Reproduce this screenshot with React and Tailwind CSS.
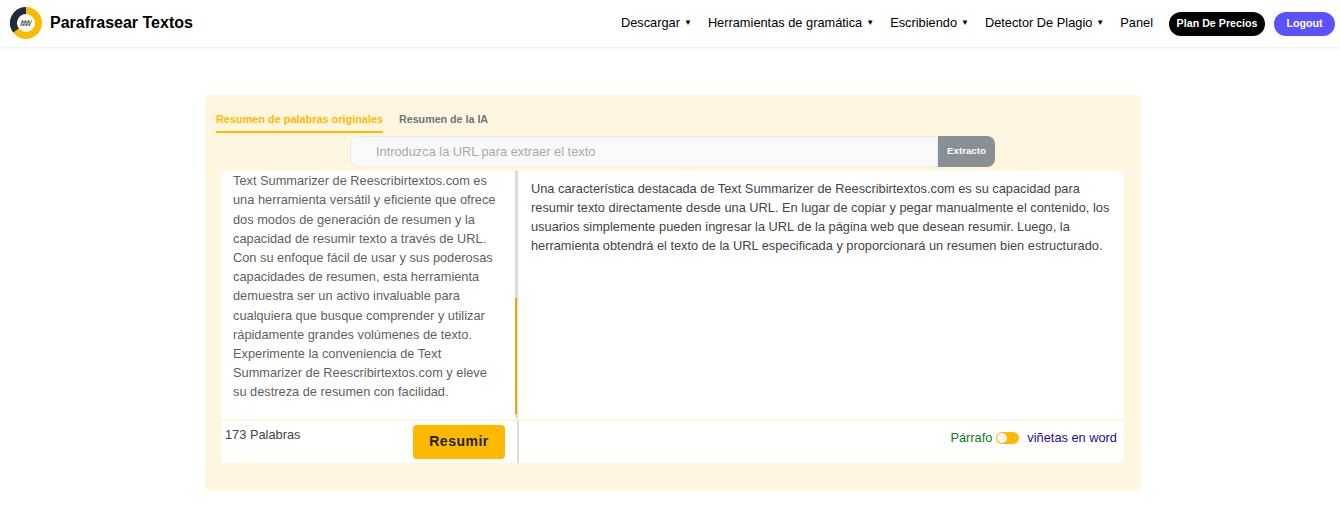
import React from "react";

const navItems = [
  { label: "Descargar", caret: true },
  { label: "Herramientas de gramática", caret: true },
  { label: "Escribiendo", caret: true },
  { label: "Detector De Plagio", caret: true },
  { label: "Panel", caret: false },
];

function Logo() {
  return (
    <svg width="32" height="32" viewBox="0 0 32 32">
      <circle cx="16" cy="16" r="12.5" fill="none" stroke="#ffb900" strokeWidth="7" />
      <path d="M16 3.5A12.5 12.5 0 0 0 6 23.5" fill="none" stroke="#1f2a44" strokeWidth="7" />
      <path d="M10.5 19l2-6 1 6 2-6 1 6 2-6 1 6 2-6M11 15h9M11 18h9" fill="none" stroke="#555" strokeWidth="0.8" />
    </svg>
  );
}

function Header() {
  return (
    <header className="h-[47px] flex items-center justify-between pl-[10px] pr-[5px] bg-white shadow-[0_1px_3px_rgba(0,0,0,0.08)]">
      <div className="flex items-center gap-2 -mt-[2px]">
        <Logo />
        <span className="text-[16px] font-bold text-black">Parafrasear Textos</span>
      </div>
      <nav className="flex items-center">
        <ul className="flex items-center gap-[16px] text-[12.8px] text-black -mt-px">
          {navItems.map((item) => (
            <li key={item.label} className="flex items-center gap-[4px]">
              {item.label}
              {item.caret && <span className="text-[8px]">▼</span>}
            </li>
          ))}
        </ul>
        <button className="ml-4 h-6 w-[96px] rounded-full bg-black text-white text-[10.7px] font-bold">Plan De Precios</button>
        <button className="ml-[9px] h-6 w-[61px] rounded-full bg-[#5b52ff] text-white text-[10.7px] font-bold">Logout</button>
      </nav>
    </header>
  );
}

function App() {
  return (
    <div className="h-[527px] bg-white overflow-hidden font-['Liberation_Sans',Arial,sans-serif]">
      <Header />
      <main className="w-[936px] h-[396px] mt-[48px] ml-[205px] bg-[#fff6df] rounded-[5px]">
        {/* tabs */}
        <div className="flex pl-[11px] pt-[16px] gap-4 text-[10.9px] font-bold">
          <div className="h-[22px] w-[167px] whitespace-nowrap border-b-2 border-[#ffb900] text-[#ffb900]">Resumen de palabras originales</div>
          <div className="text-[10.7px] text-[#6c757d]">Resumen de la IA</div>
        </div>

        {/* url box */}
        <div className="flex mt-[3px] ml-[145px] w-[645px] h-[31px]">
          <div className="flex-1 flex items-center pl-[25px] bg-[#f9f9f9] border border-[#ececec] rounded-l-lg text-[12.8px] text-[#a9a9a9]">
            Introduzca la URL para extraer el texto
          </div>
          <button className="w-[57px] bg-[#889096] rounded-r-lg text-white text-[9.7px] font-bold">Extracto</button>
        </div>

        {/* editor */}
        <div className="flex mt-1 ml-4 w-[903px] h-[292px] bg-white rounded-br-lg">
          <section className="w-[296px] flex flex-col">
            <div className="h-[248px] relative pl-3 pr-5 pt-[0.15px] text-[12.8px] leading-[19.2px] text-[#5f5f5f]">
              Text Summarizer de Reescribirtextos.com es una herramienta versátil y eficiente que ofrece dos modos de generación de resumen y la capacidad de resumir texto a través de URL. Con su enfoque fácil de usar y sus poderosas capacidades de resumen, esta herramienta demuestra ser un activo invaluable para cualquiera que busque comprender y utilizar rápidamente grandes volúmenes de texto. Experimente la conveniencia de Text Summarizer de Reescribirtextos.com y eleve su destreza de resumen con facilidad.
              <div className="absolute -right-px top-0 w-[3px] h-[247px] bg-[#dcdcdc]">
                <div className="mt-[127px] h-[116px] w-[2px] bg-[#e8a900]" />
              </div>
            </div>
            <div className="flex-1 flex justify-between border-t-2 border-[#fff6df] pl-1 pr-3">
              <span className="text-[12.8px] text-[#444] mt-1">173 Palabras</span>
              <button className="mt-[4px] w-[92px] h-[34px] rounded bg-[#ffb900] text-[14px] font-bold text-[#222] tracking-[0.5px] pb-px">Resumir</button>
            </div>
          </section>
          <section className="flex-1 flex flex-col">
            <div className="h-[248px] pl-[14px] pr-3 pt-[7.5px] text-[12.8px] leading-[19.2px] text-[#444]">
              Una característica destacada de Text Summarizer de Reescribirtextos.com es su capacidad para resumir texto directamente desde una URL. En lugar de copiar y pegar manualmente el contenido, los usuarios simplemente pueden ingresar la URL de la página web que desean resumir. Luego, la herramienta obtendrá el texto de la URL especificada y proporcionará un resumen bien estructurado.
            </div>
            <div className="flex-1 flex justify-end items-start pt-[7px] pr-[7px] border-l-2 border-l-[#dcdcdc] border-t-2 border-t-[#fff6df] text-[12.8px]">
              <span className="text-[#0a7d2c]">Párrafo</span>
              <span className="ml-[4px] mt-[4px] w-[23px] h-3 rounded-full bg-[#ffb900] flex items-center">
                <span className="w-[10px] h-[10px] ml-px rounded-full bg-[#f4f4f4]" />
              </span>
              <span className="ml-[8px] text-[#2a0a9c]">viñetas en word</span>
            </div>
          </section>
        </div>
      </main>
    </div>
  );
}

export default App;
